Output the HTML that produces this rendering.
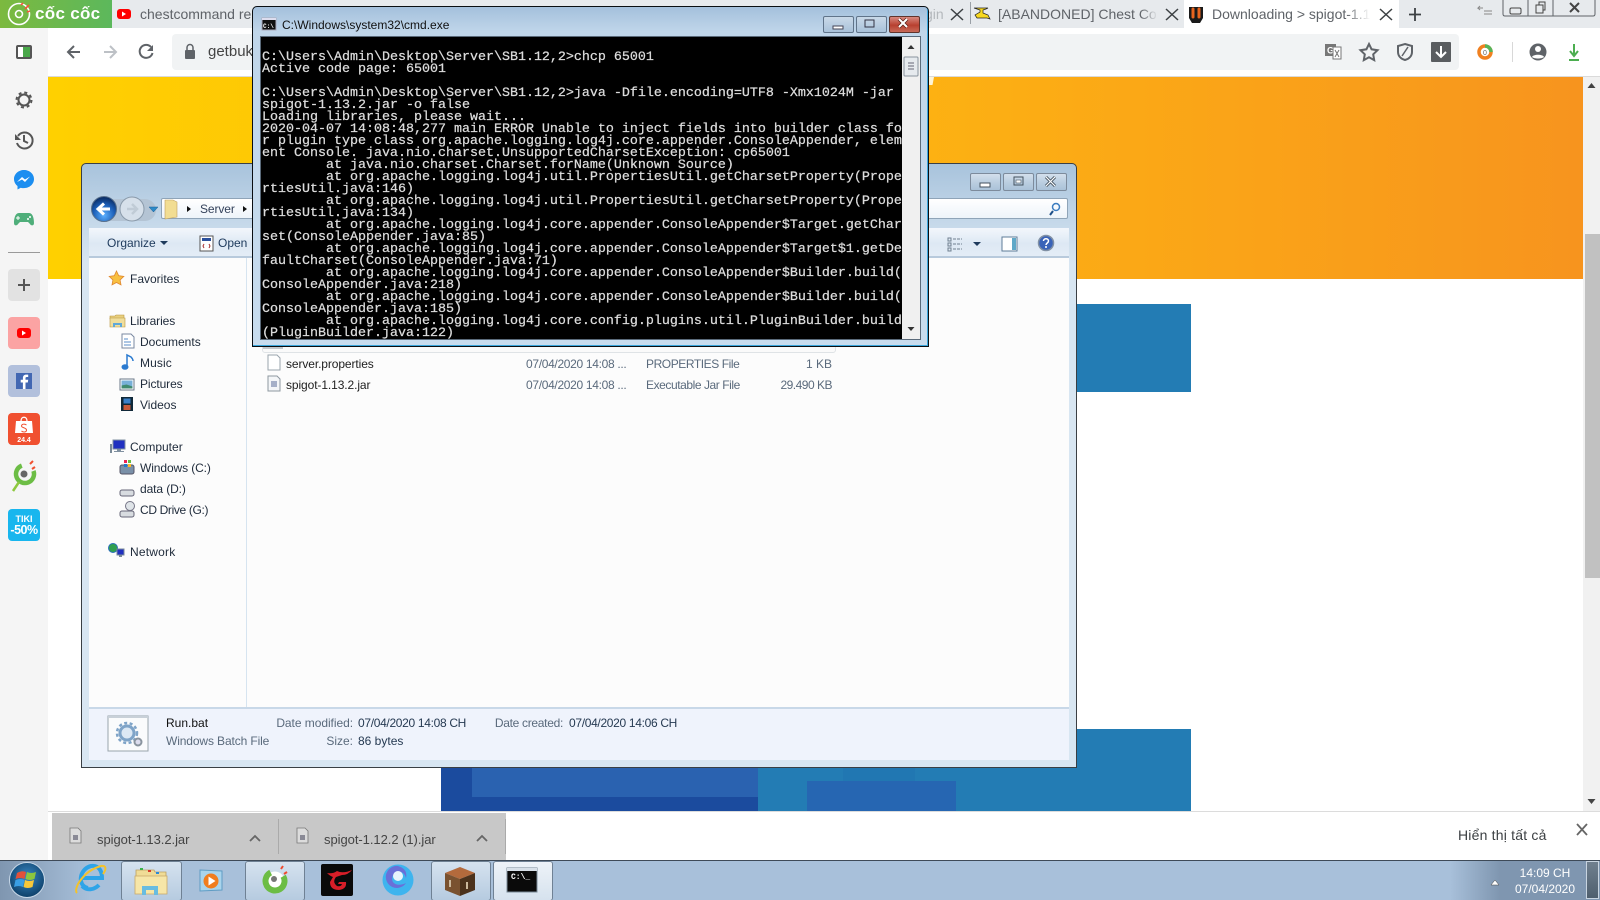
<!DOCTYPE html>
<html lang="vi"><head><meta charset="utf-8"><title>Screenshot</title>
<style>
html,body{margin:0;padding:0;width:1600px;height:900px;overflow:hidden;background:#fff}
body{position:relative;font-family:"Liberation Sans","Noto Sans CJK SC",sans-serif;font-size:12px;color:#1e1e1e}
.a{position:absolute}
.t{position:absolute;white-space:nowrap;line-height:16px;height:16px}
svg{position:absolute;left:0;top:0;overflow:visible}
.tab{color:#5f6368;font-size:14px}
.sb{position:absolute;left:8px;width:32px;height:32px;border-radius:4px}
.wbtn{position:absolute;height:16px;border:1px solid #7d8b9c;border-radius:2px;background:linear-gradient(#d3dfec,#bccfe1 50%,#aac2d8)}
pre{margin:0;position:absolute;left:261px;top:37px;width:641px;height:302px;box-sizing:border-box;padding:3px 0 0 1px;overflow:hidden;background:#000;color:#dcdcdc;font:13.33px/12px "Liberation Mono",monospace;-webkit-text-stroke:.25px #dcdcdc}
.tree{color:#1e2a3a}
.g{color:#5a6a7c}
.d{letter-spacing:-.32px}
.y{letter-spacing:-.43px}
</style></head><body>

<!-- tab strip -->
<div class="a" style="left:0;top:0;width:1600px;height:28px;background:#e7eaed"></div>
<div class="a" style="left:0;top:0;width:112px;height:28px;background:linear-gradient(90deg,#7cb93f,#5cb85c)"></div>
<div class="t" style="left:35px;top:6px;color:#fff;font-size:17px;font-weight:bold;letter-spacing:.3px">cốc cốc</div>
<div class="a" style="left:1184px;top:0;width:215px;height:28px;background:#fff"></div>
<div class="t tab" style="left:140px;top:6px">chestcommand re</div>
<div class="t tab" style="left:925px;top:6px;width:18px;overflow:hidden;color:#b4b8bc;text-align:right">gin</div>
<div class="t tab" style="left:998px;top:6px;width:158px;overflow:hidden">[ABANDONED] Chest Cor</div>
<div class="t tab" style="left:1212px;top:6px;width:158px;overflow:hidden">Downloading &gt; spigot-1.1</div>
<div class="a" style="left:1140px;top:2px;width:18px;height:24px;background:linear-gradient(90deg,rgba(231,234,237,0),#e7eaed)"></div>
<div class="a" style="left:1346px;top:2px;width:24px;height:24px;background:linear-gradient(90deg,rgba(255,255,255,0),#fff)"></div>
<div class="a" style="left:970px;top:2px;width:1px;height:22px;background:#9aa0a6"></div>

<!-- toolbar -->
<div class="a" style="left:48px;top:28px;width:1552px;height:48px;background:#fff"></div>
<div class="a" style="left:0;top:76px;width:1600px;height:1px;background:#dadada"></div>
<div class="a" style="left:172px;top:34px;width:1287px;height:36px;background:#f1f3f4;border-radius:4px"></div>
<div class="t" style="left:208px;top:44px;color:#444;font-size:15px">getbukkit.org/get/</div>
<!-- sidebar -->
<div class="a" style="left:0;top:28px;width:48px;height:832px;background:#f5f5f5"></div>
<div class="a" style="left:8px;top:252px;width:32px;height:1px;background:#9a9a9a"></div>
<div class="sb" style="top:269px;background:#e2e2e2"></div>
<div class="sb" style="top:317px;background:#fba3a3"></div>
<div class="sb" style="top:365px;background:#b2c0dc"></div>
<div class="sb" style="top:413px;background:#f05030"></div>
<div class="sb" style="top:509px;background:#18b6ee"></div>
<div class="t" style="left:8px;top:511px;width:32px;text-align:center;color:#fff;font-size:9px;font-weight:bold">TIKI</div>
<div class="t" style="left:8px;top:522px;width:32px;text-align:center;color:#fff;font-size:12.5px;font-weight:bold;letter-spacing:-.5px">-50%</div>
<div class="t" style="left:8px;top:433px;width:32px;text-align:center;color:#fff;font-size:7px;font-weight:bold">24.4</div>

<!-- page -->
<div class="a" style="left:48px;top:77px;width:1535px;height:202px;background:linear-gradient(90deg,#ffd000 0%,#fdb212 56%,#f7941e 100%)"></div>
<div class="a" style="left:1583px;top:77px;width:17px;height:734px;background:#f1f1f1"></div>
<div class="a" style="left:1585px;top:234px;width:15px;height:344px;background:#c1c1c1"></div>
<div class="a" style="left:441px;top:304px;width:750px;height:88px;background:#237cb4"></div>
<div class="a" style="left:441px;top:729px;width:317px;height:82px;background:#1b4b9e"></div>
<div class="a" style="left:472px;top:729px;width:286px;height:68px;background:#2a62b0"></div>
<div class="a" style="left:758px;top:729px;width:433px;height:82px;background:#237cb4"></div>
<div class="a" style="left:843px;top:767px;width:72px;height:14px;background:#2177b2"></div>
<div class="a" style="left:807px;top:781px;width:149px;height:30px;background:#2666b2"></div>

<!-- download bar -->
<div class="a" style="left:48px;top:811px;width:1552px;height:49px;background:#fff;border-top:1px solid #dcdcdc;box-sizing:border-box"></div>
<div class="a" style="left:52px;top:813px;width:454px;height:47px;background:#c8c8c8"></div>
<div class="a" style="left:278px;top:819px;width:1px;height:35px;background:#aaa"></div>
<div class="a" style="left:505px;top:819px;width:1px;height:35px;background:#aaa"></div>
<div class="t" style="left:97px;top:832px;font-size:13px;color:#444;letter-spacing:-.05px">spigot-1.13.2.jar</div>
<div class="t" style="left:324px;top:832px;font-size:13px;color:#444;letter-spacing:-.05px">spigot-1.12.2 (1).jar</div>
<div class="t" style="left:1458px;top:827px;font-size:14px;color:#3c4043;letter-spacing:.2px">Hiển thị tất cả</div>

<!-- taskbar -->
<div class="a" style="left:0;top:860px;width:1600px;height:40px;background:linear-gradient(90deg,#7f96b0 0,#a8c0da 90px,#a8c0da 1450px,#7f96b0 1500px);border-top:1px solid #3e4a58;box-sizing:border-box"></div>
<div class="a" style="left:121px;top:861px;width:59px;height:38px;border:1px solid #6f8194;border-radius:3px;background:linear-gradient(#d5e2ef,#b6cbe0)"></div>
<div class="a" style="left:245px;top:861px;width:58px;height:38px;border:1px solid #6f8194;border-radius:3px;background:linear-gradient(#d5e2ef,#b6cbe0)"></div>
<div class="a" style="left:431px;top:861px;width:58px;height:38px;border:1px solid #6f8194;border-radius:3px;background:linear-gradient(#d5e2ef,#b6cbe0)"></div>
<div class="a" style="left:493px;top:861px;width:58px;height:38px;border:1px solid #6f8194;border-radius:3px;background:linear-gradient(#eef3f8,#d6e2ee)"></div>
<div class="a" style="left:1586px;top:861px;width:13px;height:38px;background:linear-gradient(#70808f,#4f5f6e);border:1px solid #c8d4e0;box-sizing:border-box"></div>
<div class="t" style="left:1509px;top:865px;width:72px;text-align:center;color:#fff;font-size:12px">14:09 CH</div>
<div class="t" style="left:1509px;top:881px;width:72px;text-align:center;color:#fff;font-size:12px">07/04/2020</div>

<!-- browser & taskbar icons -->
<svg width="1600" height="900" viewBox="0 0 1600 900">
 <!-- coccoc logo -->
 <circle cx="19" cy="14" r="10.500" fill="none" stroke="#fff" stroke-width="1.600"/><circle cx="19" cy="14" r="3.500" fill="none" stroke="#fff" stroke-width="1.600"/>
 <path d="M21 5 23 3M25 9 29 5M27 12 30 11" stroke="#f4553a" stroke-width="1.600"/>
 <!-- white notch on banner -->
 <path d="M928 77h6l-1.500 8H928z" fill="#fff5d8"/>
 <!-- youtube fav -->
 <rect x="117" y="9" width="14" height="10" rx="3" fill="#f00"/><path d="M122 11.500v5l4-2.500z" fill="#fff"/>
 <!-- tab closes -->
 <g stroke="#3c4043" stroke-width="1.500" fill="none"><path d="M951 9l12 11M963 9l-12 11M1166 9l12 11M1178 9l-12 11M1380 9l12 11M1392 9l-12 11"/><path d="M1415 8v13M1409 14.500h12" stroke-width="1.800"/></g>
 <path d="M974 8h14l-2 1-3 1v3l5 2 2 4-3-1h-10l-2-3 5-3V10l-3-1z" fill="#f8d820" stroke="#222" stroke-width=".7"/>
 <path d="M1189 7h14v11l-3 5h-8l-3-5z" fill="#1a1a1a"/><path d="M1193 9v8M1199 9v8" stroke="#e8641e" stroke-width="3" stroke-linecap="round"/>
 <!-- window controls -->
 <path d="M1503 0v14q0 2 2 2h88q2 0 2-2V0" fill="#e7eaed" stroke="#5f6368"/><path d="M1528 0v16M1553 0v16" stroke="#5f6368"/>
 <rect x="1510" y="8" width="11" height="6" rx="1.500" fill="none" stroke="#444"/><rect x="1536" y="5" width="7" height="8" fill="none" stroke="#444"/><path d="M1539 5V2h6v8h-2" fill="none" stroke="#444"/><path d="M1570 3l9 9M1579 3l-9 9" stroke="#444" stroke-width="2" fill="none"/>
 <path d="M1483 8h-5l2-2M1478 8l2 2M1484 14h8M1484 11h8" stroke="#888" fill="none"/>
 <!-- sidebar top -->
 <rect x="17" y="46" width="14" height="12" rx="1" fill="#fff" stroke="#555" stroke-width="2"/><rect x="23" y="47" width="7" height="10" fill="#4aa74a"/>
 <!-- nav -->
 <path d="M80 52H69M74 46l-6 6 6 6" fill="none" stroke="#5f6368" stroke-width="2"/>
 <path d="M104 52h11M110 46l6 6-6 6" fill="none" stroke="#bdc1c6" stroke-width="2"/>
 <path d="M151 47a6.500 6.500 0 1 0 1.500 6" fill="none" stroke="#5f6368" stroke-width="2"/><path d="M153 45v6h-6z" fill="#5f6368"/>
 <rect x="185" y="50" width="10" height="9" rx="1" fill="#5f6368"/><path d="M187 50v-2.500a3 3 0 0 1 6 0V50" fill="none" stroke="#5f6368" stroke-width="1.500"/>
 <!-- right toolbar -->
 <rect x="1325" y="44" width="11" height="12" fill="#777"/><text x="1327" y="53.500" font-size="9" font-weight="bold" fill="#fff" font-family="Liberation Sans,sans-serif">G</text><rect x="1333" y="47" width="8" height="12" fill="#fff" stroke="#777"/><path d="M1335 50l4 7M1339 50l-4 7" stroke="#777"/>
 <path d="M1369 44l2.600 5.300 5.900.9-4.300 4.100 1 5.800-5.200-2.800-5.200 2.800 1-5.800-4.300-4.100 5.900-.9z" fill="none" stroke="#5f6368" stroke-width="2"/>
 <path d="M1405 44l7 2v6c0 4-3 7-7 8-4-1-7-4-7-8v-6z" fill="none" stroke="#5f6368" stroke-width="2"/><path d="M1402 56l6-9" stroke="#5f6368" stroke-width="1.500"/>
 <rect x="1431" y="42" width="20" height="20" rx="1" fill="#5a5d60"/><path d="M1441 46v10M1436 52l5 5 5-5" fill="none" stroke="#fff" stroke-width="2"/>
 <circle cx="1485" cy="52" r="6" fill="none" stroke="#f08020" stroke-width="3.500"/><path d="M1485 46a6 6 0 0 1 6 6" fill="none" stroke="#56b45a" stroke-width="3.500"/><text x="1483" y="55" font-size="7" fill="#666" font-family="Liberation Sans,sans-serif">0</text>
 <rect x="1512" y="42" width="1" height="20" fill="#d8d8d8"/>
 <circle cx="1538" cy="52" r="8.500" fill="#5f6368"/><circle cx="1538" cy="49" r="3" fill="#fff"/><path d="M1532 57c1-3 11-3 12 0-2 2-10 2-12 0z" fill="#fff"/>
 <path d="M1574 44v11M1570 51l4 5 4-5M1569 60h10" fill="none" stroke="#4cae50" stroke-width="2"/>
 <!-- sidebar icons -->
 <circle cx="24" cy="100" r="5.500" fill="none" stroke="#555" stroke-width="2"/><circle cx="24" cy="100" r="7.500" fill="none" stroke="#555" stroke-width="2" stroke-dasharray="3 2.900"/>
 <path d="M18 136a8 8 0 1 1-1 7" fill="none" stroke="#555" stroke-width="2"/><path d="M15 134v6h6z" fill="#555"/><path d="M24 135v6l4 2" fill="none" stroke="#555" stroke-width="2"/>
 <path d="M24 170c-5.500 0-10 4-10 9 0 3 1.500 5.500 3.500 7v3.500l3.300-1.800c1 .3 2 .4 3.200.4 5.500 0 10-4 10-9.100s-4.500-9-10-9z" fill="#1c8ef0"/><path d="M17 182l5-5 3 2.500 5-3-5 5.500-3-2.500z" fill="#fff"/>
 <path d="M19 213h10c4 0 5 6 5 10 0 3-3 3-4 1l-2-2h-8l-2 2c-1 2-4 2-4-1 0-4 1-10 5-10z" fill="#4fae7a"/><path d="M18 216v4M16 218h4" stroke="#fff"/><circle cx="30" cy="217" r="1" fill="#fff"/><circle cx="28" cy="219" r="1" fill="#fff"/>
 <path d="M24 279v12M18 285h12" stroke="#555" stroke-width="2"/>
 <rect x="17" y="328" width="14" height="10" rx="3" fill="#f00"/><path d="M22 330.500v5l4-2.500z" fill="#fff"/>
 <rect x="16" y="373" width="16" height="16" fill="#4267b2"/><path d="M25.500 389v-6.500h2.300l.4-2.700h-2.700v-1.500c0-.8.300-1.300 1.400-1.300h1.300v-2.400h-2c-2 0-3.300 1.200-3.300 3.400v1.800h-2.200v2.700h2.200v6.500z" fill="#fff"/>
 <path d="M16 421h16l1 12H15z" fill="#fff"/><path d="M21 421c0-5 6-5 6 0" fill="none" stroke="#fff" stroke-width="1.300"/><path d="M26.500 425c-2-1.500-5-1-5 1s5 1.500 5 4-3.500 2.500-5 1" fill="none" stroke="#f05030" stroke-width="1"/>
 <circle cx="25" cy="474" r="9" fill="none" stroke="#6cbd45" stroke-width="4.500" stroke-dasharray="42 15" transform="rotate(-20 25 474)"/><circle cx="24" cy="474" r="3.500" fill="#666"/><path d="M30 464l3-3M32 469l3-2" stroke="#f05030" stroke-width="2"/><path d="M19 482l-6 9" stroke="#8ec83f" stroke-width="2.500"/>
 <!-- download chips -->
 <g fill="#dcdcdc" stroke="#777" stroke-width=".8"><path d="M70 828h8l3 3v12H70z"/><path d="M297 828h8l3 3v12h-11z"/></g>
 <rect x="73" y="835" width="5" height="5" fill="#8a8a96"/><rect x="300" y="835" width="5" height="5" fill="#8a8a96"/>
 <path d="M250 841l5-5 5 5M477 841l5-5 5 5" fill="none" stroke="#666" stroke-width="1.800"/>
 <path d="M1577 824l10 11M1587 824l-10 11" stroke="#666" stroke-width="1.800"/>
 <!-- scrollbar arrows -->
 <path d="M1591.500 83l-4 5h8zM1591.500 804l-4-5h8z" fill="#444"/>
 <!-- orb -->
 <defs><radialGradient id="o" cx=".5" cy=".4" r=".6"><stop offset="0" stop-color="#3a88c4"/><stop offset="1" stop-color="#0d3f68"/></radialGradient></defs>
 <circle cx="27" cy="880" r="17.500" fill="url(#o)" stroke="#c8d8e8"/>
 <path d="M17 873q5-3 9-1l-1.500 7q-4-2-9 0z" fill="#e2513a"/><path d="M27 872q4 2 9 0l-1.500 7q-5 2-9 0z" fill="#8cc63f"/><path d="M15.500 880q5-2 9 0l-1.500 7q-4-2-9 0z" fill="#3a9ee4"/><path d="M25 880q4 2 9 0l-1.500 7q-5 2-9 0z" fill="#f8c83a"/>
 <!-- IE -->
 <path d="M88 888c-11-2-9-19 3-22 8-1 11 5 11 12H81M82 886c5 5 12 4 17-1" fill="none" stroke="#2ea4e8" stroke-width="4"/><path d="M77 893c-4-4 6-22 24-27 6-1 5 4 2 8" fill="none" stroke="#f3c22c" stroke-width="2"/>
 <!-- Explorer -->
 <path d="M136 870h18l1 2h11v6h-30z" fill="#f0dc96" stroke="#bca060" stroke-width=".8"/><path d="M135 876h32v18h-32z" fill="#f6e6a8" stroke="#c8a868" stroke-width=".8"/><path d="M142 895v-9h16v9h-4v-5h-8v5z" fill="#68bce0"/>
 <rect x="140" y="868" width="3" height="2" fill="#3ab34a"/><rect x="148" y="870" width="3" height="2" fill="#d83a2a"/><rect x="156" y="872" width="3" height="2" fill="#2a8ad8"/>
 <!-- media -->
 <path d="M200 870l22 1v19l-22 1z" fill="#a9d4ec" stroke="#5f9cc4"/><circle cx="211" cy="881" r="7.500" fill="#f07d1e"/><path d="M208.500 876.500v9l7-4.500z" fill="#fff"/>
 <!-- coc coc task -->
 <circle cx="275" cy="881" r="9.500" fill="#fff" stroke="#6cbd45" stroke-width="6" stroke-dasharray="45 15" transform="rotate(-30 275 881)"/><circle cx="274" cy="879" r="3" fill="#777"/><path d="M281 869l2-3M284 874l3-2" stroke="#ef4b2f" stroke-width="2"/>
 <!-- garena -->
 <rect x="321" y="864" width="32" height="32" rx="2" fill="#0a0a0a"/><path d="M327 873q6 1 10-2 6 3 15-1-4 5-10 5l-6 2q-4 5 1 9 4 1 5-2h-4l1-2h7q1 7-7 8-9 0-9-8l3-5q-3-1-6-4z" fill="#d81e28"/>
 <!-- blue app -->
 <circle cx="398" cy="880" r="15.500" fill="#3eb4ee"/><path d="M398 866a11 11 0 1 0 8 17c-4 2-10 3-13-1-3-5 2-12 8-10 3 1 4 3 5 6q2-9-8-12z" fill="#6a6fd8"/><circle cx="398" cy="876" r="5" fill="#e8f4fc"/>
 <!-- crafting -->
 <path d="M460 867l15 6-15 6-15-6z" fill="#b46a3c"/><path d="M445 873l15 6v17l-15-6z" fill="#7a5230"/><path d="M475 873l-15 6v17l15-6z" fill="#4c321c"/><path d="M450 880v7M467 882v7" stroke="#cbb89c" stroke-width="2"/>
 <!-- cmd task -->
 <rect x="507" y="868" width="30" height="24" fill="#0a0a0a" stroke="#7a8a98"/><rect x="507" y="868" width="30" height="3" fill="#d8e0e8"/>
 <path d="M1495 880l-4 5h8z" fill="#fff" stroke="#444" stroke-width=".5"/>
</svg>
<div class="t" style="left:511px;top:871px;color:#fff;font:bold 8px/14px 'Liberation Mono',monospace">C:\_</div>

<!-- explorer window -->
<div class="a" style="left:81px;top:163px;width:996px;height:605px;border:1px solid #3a3f44;border-right-width:1.500px;border-bottom-width:1.500px;border-radius:5px 5px 0 0;background:linear-gradient(#a8c3dc 0,#c6d9ea 60px,#d8e6f2 100px);box-sizing:border-box"></div>
<div class="wbtn" style="left:970px;top:173px;width:29px"></div>
<div class="wbtn" style="left:1003px;top:173px;width:29px"></div>
<div class="wbtn" style="left:1036px;top:173px;width:29px"></div>
<div class="a" style="left:161px;top:198px;width:907px;height:21px;background:linear-gradient(#fff,#eef4fa);border:1px solid #8fa4b8;box-sizing:border-box;border-radius:2px"></div>
<div class="t" style="left:200px;top:201px;color:#33415a;letter-spacing:-.1px">Server</div>
<div class="a" style="left:89px;top:228px;width:980px;height:30px;background:linear-gradient(#f3f7fc,#dde8f4 55%,#e4edf6);border-bottom:2px solid #b8cadc;box-sizing:border-box"></div>
<div class="t" style="left:107px;top:235px;color:#1e3a5c">Organize</div>
<div class="t" style="left:218px;top:235px;color:#1e3a5c">Open</div>
<div class="a" style="left:89px;top:258px;width:980px;height:449px;background:#fcfcfc"></div>
<div class="a" style="left:246px;top:258px;width:1px;height:449px;background:#d6e4f0"></div>
<div class="a" style="left:89px;top:707px;width:980px;height:2px;background:#c8d8e8"></div>
<div class="a" style="left:89px;top:709px;width:980px;height:51px;background:#eff3fc"></div>

<div class="t tree" style="left:130px;top:271px">Favorites</div>
<div class="t tree" style="left:130px;top:313px;letter-spacing:-.1px">Libraries</div>
<div class="t tree" style="left:140px;top:334px">Documents</div>
<div class="t tree" style="left:140px;top:355px;letter-spacing:.1px">Music</div>
<div class="t tree" style="left:140px;top:376px;letter-spacing:-.1px">Pictures</div>
<div class="t tree" style="left:140px;top:397px">Videos</div>
<div class="t tree" style="left:130px;top:439px">Computer</div>
<div class="t tree" style="left:140px;top:460px;letter-spacing:-.1px">Windows (C:)</div>
<div class="t tree" style="left:140px;top:481px;letter-spacing:-.1px">data (D:)</div>
<div class="t tree" style="left:140px;top:502px;letter-spacing:-.35px">CD Drive (G:)</div>
<div class="t tree" style="left:130px;top:544px;letter-spacing:.2px">Network</div>

<div class="a" style="left:262px;top:344px;width:574px;height:9px;border:1px solid #dfe3e6;border-radius:3px;background:#fafafa;box-sizing:border-box"></div>
<div class="a" style="left:263px;top:347px;width:20px;height:2px;background:#c4c8cc"></div>
<div class="t" style="left:286px;top:356px;letter-spacing:-.1px">server.properties</div>
<div class="t g d" style="left:526px;top:356px">07/04/2020 14:08 ...</div>
<div class="t g y" style="left:646px;top:356px">PROPERTIES File</div>
<div class="t g" style="left:760px;top:356px;width:72px;text-align:right">1 KB</div>
<div class="t" style="left:286px;top:377px;letter-spacing:-.1px">spigot-1.13.2.jar</div>
<div class="t g d" style="left:526px;top:377px">07/04/2020 14:08 ...</div>
<div class="t g y" style="left:646px;top:377px">Executable Jar File</div>
<div class="t g" style="left:760px;top:377px;width:72px;text-align:right;letter-spacing:-.5px">29.490 KB</div>

<div class="t" style="left:166px;top:715px;color:#111">Run.bat</div>
<div class="t g" style="left:166px;top:733px;letter-spacing:-.12px">Windows Batch File</div>
<div class="t g" style="left:253px;top:715px;width:100px;text-align:right;letter-spacing:-.05px">Date modified:</div>
<div class="t d" style="left:358px;top:715px;color:#263a52">07/04/2020 14:08 CH</div>
<div class="t g" style="left:463px;top:715px;width:100px;text-align:right;letter-spacing:-.3px">Date created:</div>
<div class="t d" style="left:569px;top:715px;color:#263a52">07/04/2020 14:06 CH</div>
<div class="t g" style="left:253px;top:733px;width:100px;text-align:right">Size:</div>
<div class="t" style="left:358px;top:733px;color:#263a52">86 bytes</div>

<svg width="1600" height="900" viewBox="0 0 1600 900">
 <!-- window glyphs -->
 <rect x="980" y="183" width="10" height="4" fill="#fff" stroke="#44525f"/><rect x="1014" y="177" width="9" height="8" fill="none" stroke="#44525f"/><rect x="1016" y="180" width="5" height="3" fill="#fff" stroke="#44525f" stroke-width=".6"/>
 <path d="M1046 177l9 9M1055 177l-9 9" stroke="#44525f" stroke-width="3"/><path d="M1046 177l9 9M1055 177l-9 9" stroke="#fff" stroke-width="1.200"/>
 <!-- nav -->
 <rect x="92" y="199" width="64" height="22" rx="11" fill="#b4c4d4"/>
 <defs><radialGradient id="b" cx=".5" cy=".75" r=".7"><stop offset="0" stop-color="#5cb0ff"/><stop offset=".6" stop-color="#1c5fb8"/><stop offset="1" stop-color="#0c2f68"/></radialGradient></defs>
 <circle cx="104" cy="209" r="12.500" fill="url(#b)" stroke="#58708c"/><path d="M110 209H99M104 203.500l-6 5.500 6 5.500" fill="none" stroke="#fff" stroke-width="3"/>
 <circle cx="132" cy="209" r="12" fill="#d6e0ea" stroke="#8a9aaa"/><path d="M127 209h9M132 204l5 5-5 5" fill="none" stroke="#c0cbd6" stroke-width="2.500"/>
 <path d="M149 207h9l-4.500 5z" fill="#2c8ac8" stroke="#1e5f94" stroke-width=".5"/>
 <path d="M165 200h8l4 2v15l-12 2z" fill="#f2dd92" stroke="#c0a060" stroke-width=".6"/>
 <path d="M187 206l4 3-4 3zM243 206l4 3-4 3z" fill="#111"/>
 <circle cx="1056" cy="207" r="3.500" fill="none" stroke="#3b7cc0" stroke-width="1.500"/><path d="M1053 211l-3 4" stroke="#1e4f88" stroke-width="2"/>
 <!-- toolbar glyphs -->
 <path d="M160 241h8l-4 4z" fill="#1e3a5c"/>
 <rect x="200" y="236" width="13" height="15" fill="#fff" stroke="#555"/><rect x="202" y="238" width="9" height="3" fill="#2a4f9c"/><path d="M204 244l-1 2 1 2M209 244l1 2-1 2" stroke="#a33" fill="none"/>
 <path d="M948 238h3v3h-3zM948 243h3v3h-3zM948 248h3v3h-3z" fill="none" stroke="#708090"/><path d="M953 239h9M953 244h9M953 249h9" stroke="#708090" stroke-dasharray="3 1"/>
 <path d="M973 242h8l-4 4z" fill="#1e3a5c"/>
 <rect x="1002" y="237" width="15" height="14" fill="#fff" stroke="#5f7c98"/><rect x="1012" y="238" width="4" height="12" fill="#5fa8c8"/>
 <circle cx="1046" cy="243" r="7.500" fill="#3a63b8" stroke="#8090a4" stroke-width="1.500"/><path d="M1043.500 241c0-3 5-3 5 0 0 2-2.500 2-2.500 4" fill="none" stroke="#fff" stroke-width="1.500"/><circle cx="1046" cy="247" r="1" fill="#fff"/>
 <!-- tree icons -->
 <path d="M116.500 271l2.200 4.700 5.100.7-3.700 3.500.9 5-4.500-2.400-4.500 2.400.9-5-3.700-3.500 5.100-.7z" fill="#f8c040" stroke="#e08830" stroke-width=".8"/>
 <path d="M110 316h5l1-1h8v4h-14z" fill="#e8cf7e" stroke="#b8963e" stroke-width=".6"/><path d="M110 318h15v9h-15z" fill="#f0de9c" stroke="#b8963e" stroke-width=".6"/><path d="M113 327v-4h9v4h-2v-2h-5v2z" fill="#60a8d8"/>
 <path d="M122 334h9l3 3v11h-12z" fill="#fff" stroke="#7a88a0"/><path d="M124 339h4M124 342h7M124 345h7" stroke="#5a8cc8"/>
 <path d="M127 367V355l4 2c1 1 2 2 2 4" fill="none" stroke="#2a7ad0" stroke-width="1.500"/><ellipse cx="125" cy="367" rx="3.500" ry="2.800" fill="#2a7ad0"/>
 <rect x="120" y="379" width="14" height="11" fill="#fff" stroke="#6a7888"/><rect x="121.500" y="380.500" width="11" height="8" fill="#78b0d8"/><path d="M121.500 388.500v-3l5-1 6 2v2z" fill="#408a70"/>
 <rect x="121" y="397" width="12" height="14" fill="#102838"/><rect x="123.500" y="398.500" width="7" height="5" fill="#3a80c8"/><rect x="123.500" y="405" width="7" height="5" fill="#c85a3a"/>
 <rect x="113" y="440" width="12" height="9" fill="#2030c0" stroke="#8090a0"/><rect x="117" y="449" width="4" height="2" fill="#8090a0"/><rect x="110" y="444" width="2" height="9" fill="#7a8a98"/><rect x="114" y="451" width="10" height="1" fill="#8090a0"/>
 <rect x="120" y="465" width="14" height="9" rx="2" fill="#7a90a8" stroke="#556"/><rect x="124" y="460" width="3" height="3" fill="#e25"/><rect x="128" y="460" width="3" height="3" fill="#6b4"/><rect x="124" y="464" width="3" height="3" fill="#27c"/><rect x="128" y="464" width="3" height="3" fill="#fb2"/>
 <rect x="120" y="490" width="14" height="6" rx="2" fill="#d8dce0" stroke="#667"/>
 <rect x="120" y="511" width="14" height="6" rx="2" fill="#d8dce0" stroke="#667"/><circle cx="130" cy="506" r="4.500" fill="#dfe4e8" stroke="#778"/>
 <circle cx="113" cy="548" r="4.500" fill="#30a050" stroke="#2a70b8"/><rect x="117" y="549" width="7" height="6" fill="#2030c0" stroke="#789"/><rect x="119" y="555" width="3" height="2" fill="#789"/>
 <!-- file icons -->
 <path d="M268 355h9l3 3v12h-12z" fill="#fff" stroke="#9aa4ac"/>
 <path d="M268 376h9l3 3v12h-12z" fill="#f4f6f8" stroke="#8e98a0"/><rect x="271" y="381" width="6" height="6" fill="#a6b0c8"/>
 <!-- details icon -->
 <rect x="108" y="716" width="40" height="35" fill="#fafbfc" stroke="#9aa4ac"/><rect x="108" y="716" width="40" height="2" fill="#c8d0d8"/>
 <circle cx="127" cy="733" r="7" fill="#dce8f4" stroke="#7fa4c8" stroke-width="3"/><circle cx="127" cy="733" r="10" fill="none" stroke="#7fa4c8" stroke-width="2.500" stroke-dasharray="3 2.500"/><circle cx="138" cy="742" r="3.500" fill="#dde" stroke="#8a949e" stroke-width="2"/>
</svg>

<!-- cmd window -->
<div class="a" style="left:252px;top:6px;width:677px;height:341px;border:1.500px solid #0a0e12;border-radius:5px 5px 0 0;background:linear-gradient(#a4c0dc 0,#c0d6ea 25px,#c8dcee 100%);box-shadow:inset -1px -1px 0 #3aa6dc;box-sizing:border-box"></div>
<div class="t" style="left:282px;top:17px;color:#111;font-size:12px">C:\Windows\system32\cmd.exe</div>
<div class="a" style="left:823px;top:16px;width:29px;height:15px;border:1px solid #60748a;border-radius:2px;background:linear-gradient(#c9d9e8,#a9c2da)"></div>
<div class="a" style="left:856px;top:16px;width:29px;height:15px;border:1px solid #60748a;border-radius:2px;background:linear-gradient(#c9d9e8,#a9c2da)"></div>
<div class="a" style="left:889px;top:16px;width:29px;height:15px;border:1px solid #60342c;border-radius:2px;background:linear-gradient(#d88a80,#b84030 55%,#c86a58)"></div>
<div class="a" style="left:260px;top:36px;width:661px;height:304px;background:#f0f0f0;border:1px solid #5a6a7a;box-sizing:border-box"></div>
<pre>

C:\Users\Admin\Desktop\Server\SB1.12,2&gt;chcp 65001
Active code page: 65001

C:\Users\Admin\Desktop\Server\SB1.12,2&gt;java -Dfile.encoding=UTF8 -Xmx1024M -jar
spigot-1.13.2.jar -o false
Loading libraries, please wait...
2020-04-07 14:08:48,277 main ERROR Unable to inject fields into builder class fo
r plugin type class org.apache.logging.log4j.core.appender.ConsoleAppender, elem
ent Console. java.nio.charset.UnsupportedCharsetException: cp65001
        at java.nio.charset.Charset.forName(Unknown Source)
        at org.apache.logging.log4j.util.PropertiesUtil.getCharsetProperty(Prope
rtiesUtil.java:146)
        at org.apache.logging.log4j.util.PropertiesUtil.getCharsetProperty(Prope
rtiesUtil.java:134)
        at org.apache.logging.log4j.core.appender.ConsoleAppender$Target.getChar
set(ConsoleAppender.java:85)
        at org.apache.logging.log4j.core.appender.ConsoleAppender$Target$1.getDe
faultCharset(ConsoleAppender.java:71)
        at org.apache.logging.log4j.core.appender.ConsoleAppender$Builder.build(
ConsoleAppender.java:218)
        at org.apache.logging.log4j.core.appender.ConsoleAppender$Builder.build(
ConsoleAppender.java:185)
        at org.apache.logging.log4j.core.config.plugins.util.PluginBuilder.build
(PluginBuilder.java:122)</pre>
<svg width="1600" height="900" viewBox="0 0 1600 900">
 <rect x="262" y="18" width="14" height="12" fill="#111" stroke="#aab"/><rect x="262" y="18" width="14" height="2" fill="#dde"/>
 <text x="263" y="28" font-size="6" font-weight="bold" fill="#fff" font-family="Liberation Mono,monospace">C:\</text>
 <rect x="833" y="26" width="10" height="3" fill="#fff" stroke="#445"/><rect x="865" y="20" width="9" height="7" fill="none" stroke="#334"/>
 <path d="M899 19l8 8M907 19l-8 8" stroke="#5a2018" stroke-width="3.500"/><path d="M899 19l8 8M907 19l-8 8" stroke="#fff" stroke-width="2"/>
 <path d="M911 45l-3.500 4h7zM911 331l-3.500-4h7z" fill="#333"/>
 <rect x="904" y="57" width="14" height="19" rx="1" fill="#e6eaee" stroke="#8a949e"/>
 <path d="M908 63h6M908 66h6M908 69h6" stroke="#667"/>
</svg>
</body></html>
